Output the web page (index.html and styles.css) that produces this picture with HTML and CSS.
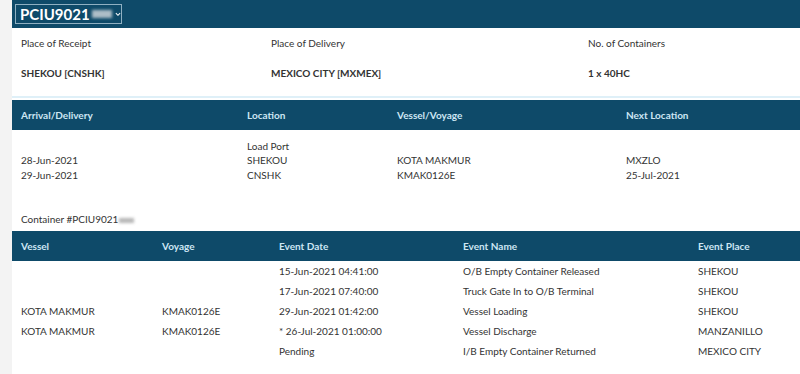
FILE: index.html
```html
<!DOCTYPE html>
<html>
<head>
<meta charset="utf-8">
<link rel="stylesheet" href="styles.css">
</head>
<body>
<div class="page">
  <div class="topbar">
    <div class="select">
      <span class="sel-text">PCIU9021</span><span class="blur blur-lg"></span>
      <svg class="chev" width="7" height="5" viewBox="0 0 7 5"><path d="M1 1 L3.5 3.5 L6 1" fill="none" stroke="#fff" stroke-width="1.2"/></svg>
    </div>
  </div>

  <div class="info">
    <div class="info-grid">
      <div class="lbl">Place of Receipt</div>
      <div class="lbl">Place of Delivery</div>
      <div class="lbl">No. of Containers</div>
      <div class="val">SHEKOU [CNSHK]</div>
      <div class="val">MEXICO CITY [MXMEX]</div>
      <div class="val">1 x 40HC</div>
    </div>
  </div>

  <div class="thead t1">
    <div>Arrival/Delivery</div>
    <div>Location</div>
    <div>Vessel/Voyage</div>
    <div>Next Location</div>
  </div>
  <div class="t1 tbody1">
    <div><br>28-Jun-2021<br>29-Jun-2021</div>
    <div>Load Port<br>SHEKOU<br>CNSHK</div>
    <div><br>KOTA MAKMUR<br>KMAK0126E</div>
    <div><br>MXZLO<br>25-Jul-2021</div>
  </div>

  <div class="container-title">Container #PCIU9021<span class="blur blur-sm"></span></div>

  <div class="thead t2">
    <div>Vessel</div>
    <div>Voyage</div>
    <div>Event Date</div>
    <div>Event Name</div>
    <div>Event Place</div>
  </div>
  <div class="t2 trow"><div></div><div></div><div>15-Jun-2021 04:41:00</div><div>O/B Empty Container Released</div><div>SHEKOU</div></div>
  <div class="t2 trow"><div></div><div></div><div>17-Jun-2021 07:40:00</div><div>Truck Gate In to O/B Terminal</div><div>SHEKOU</div></div>
  <div class="t2 trow"><div>KOTA MAKMUR</div><div>KMAK0126E</div><div>29-Jun-2021 01:42:00</div><div>Vessel Loading</div><div>SHEKOU</div></div>
  <div class="t2 trow"><div>KOTA MAKMUR</div><div>KMAK0126E</div><div>* 26-Jul-2021 01:00:00</div><div>Vessel Discharge</div><div>MANZANILLO</div></div>
  <div class="t2 trow"><div></div><div></div><div>Pending</div><div>I/B Empty Container Returned</div><div>MEXICO CITY</div></div>
</div>
</body>
</html>
```

FILE: styles.css
```css
html, body {
  margin: 0;
  padding: 0;
}
body {
  background: #f3f3f3;
  font-family: Lato, "Open Sans", sans-serif;
  font-size: 10px;
  color: #333;
}
.page {
  margin-left: 12px;
  background: #fff;
  height: 374px;
  overflow: hidden;
}
.topbar {
  background: #0e4a69;
  height: 28px;
  padding: 4px 3px;
  box-sizing: border-box;
}
.select {
  width: 107px;
  height: 20px;
  box-sizing: border-box;
  border: 1px solid #8fb0c2;
  display: flex;
  align-items: center;
  padding-left: 4px;
}
.sel-text {
  color: #fff;
  font-weight: 700;
  font-size: 15px;
}
.blur {
  display: inline-block;
  background: #c9d2d8;
  filter: blur(1.5px);
  opacity: 0.85;
}
.blur-lg {
  width: 24px;
  height: 8px;
  margin-left: 2px;
}
.blur-sm {
  width: 15px;
  height: 5px;
  margin-left: 1px;
  background: #aaa;
  vertical-align: middle;
}
.chev {
  margin-left: 3px;
}
.info {
  border-bottom: 2px solid #dff0f8;
  height: 68px;
}
.info-grid {
  display: grid;
  grid-template-columns: 250px 317px 1fr;
  padding: 8px 0 0 9px;
  row-gap: 16px;
}
.lbl {
  line-height: 14px;
}
.val {
  font-weight: 700;
  line-height: 14px;
}
.thead {
  background: #0e4a69;
  color: #cde6f4;
  font-weight: 700;
  height: 30px;
  line-height: 30px;
}
.t1 {
  display: grid;
  grid-template-columns: 226px 150px 229px 1fr;
  padding-left: 9px;
}
.thead.t1 {
  margin-top: 2px;
}
.tbody1 {
  padding-top: 9px;
  line-height: 14.3px;
}
.container-title {
  padding-left: 9px;
  margin-top: 30px;
  line-height: 14px;
  height: 19px;
}
.t2 {
  display: grid;
  grid-template-columns: 141px 117px 184px 235px 1fr;
  padding-left: 9px;
}
.trow {
  height: 20px;
  line-height: 20px;
}
```
